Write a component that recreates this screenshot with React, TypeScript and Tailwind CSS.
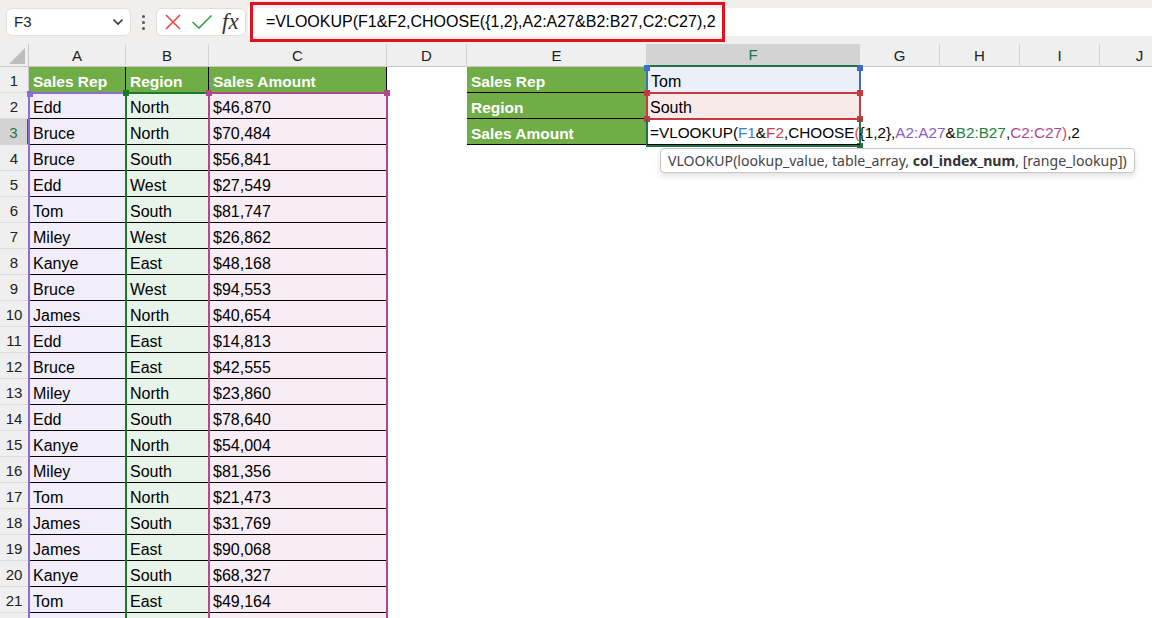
import React from "react"

const FONT = { fontFamily: '"Liberation Sans", Arial, sans-serif' }

const cols = [
  { l: "A", w: 97 },
  { l: "B", w: 83 },
  { l: "C", w: 178 },
  { l: "D", w: 80 },
  { l: "E", w: 180 },
  { l: "F", w: 213 },
  { l: "G", w: 80 },
  { l: "H", w: 80 },
  { l: "I", w: 80 },
  { l: "J", w: 80 },
]

const rows: [string, string, string][] = [
  ["Edd", "North", "$46,870"],
  ["Bruce", "North", "$70,484"],
  ["Bruce", "South", "$56,841"],
  ["Edd", "West", "$27,549"],
  ["Tom", "South", "$81,747"],
  ["Miley", "West", "$26,862"],
  ["Kanye", "East", "$48,168"],
  ["Bruce", "West", "$94,553"],
  ["James", "North", "$40,654"],
  ["Edd", "East", "$14,813"],
  ["Bruce", "East", "$42,555"],
  ["Miley", "North", "$23,860"],
  ["Edd", "South", "$78,640"],
  ["Kanye", "North", "$54,004"],
  ["Miley", "South", "$81,356"],
  ["Tom", "North", "$21,473"],
  ["James", "South", "$31,769"],
  ["James", "East", "$90,068"],
  ["Kanye", "South", "$68,327"],
  ["Tom", "East", "$49,164"],
  ["", "", ""],
]

const lookup: [string, string, string][] = [
  ["Sales Rep", "Tom", "bg-[#ebf0f8]"],
  ["Region", "South", "bg-[#f9eaea]"],
  ["Sales Amount", "", "bg-transparent"],
]

function Toolbar() {
  return (
    <div className="relative flex h-[44px] items-center bg-[#f1eeee]">
      <div className="ml-[6px] flex h-[28px] w-[125px] items-center justify-between rounded-[6px] border border-[#e1dede] bg-white pl-[7px] pr-[6px] text-[15px] text-[#222]">
        <span>F3</span>
        <svg width="12" height="8" viewBox="0 0 12 8">
          <path d="M1.5 1.5 L6 6 L10.5 1.5" fill="none" stroke="#333" strokeWidth="1.6" />
        </svg>
      </div>
      <div className="ml-[11px] flex flex-col gap-[3px]">
        <span className="h-[3px] w-[3px] rounded-full bg-[#555]" />
        <span className="h-[3px] w-[3px] rounded-full bg-[#555]" />
        <span className="h-[3px] w-[3px] rounded-full bg-[#555]" />
      </div>
      <div className="ml-[11px] flex h-[28px] w-[90px] items-center gap-[9px] rounded-[6px] border border-[#e1dede] bg-white pl-[7px]">
        <svg width="18" height="18" viewBox="0 0 18 18">
          <path d="M2 2 L16 16 M16 2 L2 16" stroke="#e5484d" strokeWidth="1.6" />
        </svg>
        <svg width="22" height="18" viewBox="0 0 22 18">
          <path d="M1.5 9 L8 15 L20.5 2.5" fill="none" stroke="#3fa34d" strokeWidth="1.7" />
        </svg>
        <span className="-mt-[2px] text-[23px] italic leading-none text-[#333]" style={{ fontFamily: '"Liberation Serif", serif' }}>
          fx
        </span>
      </div>
      <div className="ml-[2px] flex h-[28px] flex-1 items-center bg-white">
        <div className="-my-[6px] ml-[2px] flex h-[40px] w-[475px] items-center border-[3px] border-[#e3121c] pl-[13px] text-[16px] text-black">
          =VLOOKUP(F1&amp;F2,CHOOSE({"{"}1,2{"}"},A2:A27&amp;B2:B27,C2:C27),2
        </div>
      </div>
    </div>
  )
}

function F3Formula() {
  return (
    <span className="whitespace-nowrap text-[15.3px] text-black">
      =VLOOKUP(<span className="text-[#3b7bd0]">F1</span>&amp;<span className="text-[#d0414e]">F2</span>,CHOOSE
      <span className="text-[#e0445a]">(</span>
      {"{1,2}"},<span className="text-[#8a5cc8]">A2:A27</span>&amp;<span className="text-[#21823a]">B2:B27</span>,
      <span className="text-[#b3468b]">C2:C27</span>
      <span className="text-[#e0445a]">)</span>,2
    </span>
  )
}

const Sq = ({ c, cls }: { c: string; cls: string }) => <span className={`absolute h-[6px] w-[6px] ${c} ${cls}`} />

export default function App() {
  return (
    <div className="h-[618px] w-[1152px] overflow-hidden bg-white" style={FONT}>
      <Toolbar />
      <div className="relative">
        <div className="grid grid-cols-[29px_97px_83px_178px_80px_180px_213px_80px_80px_80px_80px] grid-rows-[23px] auto-rows-[26px]">
          {/* corner */}
          <div className="relative border-b border-r border-[#c9c9c9] bg-[#efefef]">
            <svg className="absolute left-[9px] top-[4px]" width="16" height="16" viewBox="0 0 16 16">
              <path d="M16 0 L16 16 L0 16 Z" fill="#bdbdbd" />
            </svg>
          </div>
          {cols.map((c) =>
            c.l === "F" ? (
              <div key={c.l} className="flex items-center justify-center border-b-2 border-r border-b-[#217346] border-r-[#d4d4d4] bg-[#d3d3d3] pt-[2px] text-[15px] text-[#217346]">
                {c.l}
              </div>
            ) : (
              <div key={c.l} className="flex items-center justify-center border-b border-r border-b-[#c9c9c9] border-r-[#d4d4d4] bg-[#efefef] pt-[2px] text-[15px] text-[#222]">
                {c.l}
              </div>
            )
          )}

          {/* row 1 */}
          <RowHead n={1} />
          <Head>Sales Rep</Head>
          <Head>Region</Head>
          <Head>Sales Amount</Head>
          <div />
          <Head>{lookup[0][0]}</Head>
          <div className={`flex items-center border-b border-black pl-[4px] pt-[4px] text-[16px] ${lookup[0][2]}`}>Tom</div>
          <div /><div /><div /><div />

          {rows.map((r, i) => {
            const n = i + 2
            const lk = n <= 3 ? lookup[n - 1] : null
            return (
              <React.Fragment key={n}>
                <RowHead n={n} />
                <div className="flex items-center border-b border-black bg-[#f1eefa] pl-[4px] pt-[4px] text-[16px]">{r[0]}</div>
                <div className="flex items-center border-b border-black bg-[#e8f3ea] pl-[4px] pt-[4px] text-[16px]">{r[1]}</div>
                <div className="flex items-center border-b border-black bg-[#f8edf5] pl-[4px] pt-[4px] text-[16px]">{r[2]}</div>
                <div />
                {lk ? (
                  <>
                    <Head>{lk[0]}</Head>
                    <div
                      className={`flex items-center border-b border-black pl-[3px] pt-[4px] text-[16px] ${lk[2]} ${
                        n === 3 ? "relative z-30" : ""
                      }`}
                    >
                      {n === 3 ? <F3Formula /> : lk[1]}
                    </div>
                  </>
                ) : (
                  <>
                    <div />
                    <div />
                  </>
                )}
                <div /><div /><div /><div />
              </React.Fragment>
            )
          })}
        </div>

        {/* reference range highlights */}
        <div className="pointer-events-none absolute left-[28px] top-[48px] h-[600px] w-[99px] border-2 border-[#8b6fd0]">
          <Sq c="bg-[#8b6fd0]" cls="-left-[3px] -top-[3px]" />
        </div>
        <div className="pointer-events-none absolute left-[125px] top-[48px] h-[600px] w-[85px] border-2 border-[#1d7a2a]">
          <Sq c="bg-[#1d7a2a]" cls="-left-[4px] -top-[4px]" />
        </div>
        <div className="pointer-events-none absolute left-[208px] top-[48px] h-[600px] w-[180px] border-2 border-[#b04a8c]">
          <Sq c="bg-[#b04a8c]" cls="-left-[4px] -top-[4px]" />
          <Sq c="bg-[#b04a8c]" cls="-right-[4px] -top-[4px]" />
        </div>

        {/* F1 blue */}
        <div className="pointer-events-none absolute left-[646px] top-[23px] z-20 h-[27px] w-[215px] border-x-2 border-[#3a6fc4]">
          <Sq c="bg-[#3a6fc4]" cls="-left-[4px] -top-[2px]" />
          <Sq c="bg-[#3a6fc4]" cls="-right-[4px] -top-[2px]" />
        </div>
        {/* F2 red */}
        <div className="pointer-events-none absolute left-[646px] top-[48px] z-20 h-[28px] w-[215px] border-2 border-[#c7383f]">
          <Sq c="bg-[#c7383f]" cls="-left-[4px] -top-[4px]" />
          <Sq c="bg-[#c7383f]" cls="-right-[4px] -top-[4px]" />
          <Sq c="bg-[#c7383f]" cls="-left-[4px] -bottom-[4px]" />
          <Sq c="bg-[#c7383f]" cls="-right-[4px] -bottom-[4px]" />
        </div>
        {/* F3 active */}
        <div className="pointer-events-none absolute left-[646px] top-[75px] z-20 h-[28px] w-[215px] border-2 border-t-0 border-[#217346]">
          <Sq c="bg-[#217346]" cls="-right-[4px] -bottom-[4px]" />
        </div>

        {/* tooltip */}
        <div
          className="absolute left-[660px] top-[104px] z-40 flex h-[25px] items-center rounded-[4px] border border-[#c6c6c6] bg-white px-[7px] text-[14.1px] text-[#444] shadow-[0_3px_6px_rgba(0,0,0,0.12)]"
          style={{ fontFamily: '"Noto Sans", "Open Sans", sans-serif' }}
        >
          VLOOKUP(lookup_value, table_array, <b className="font-bold text-[#333]">&nbsp;col_index_num</b>, [range_lookup])
        </div>
      </div>
    </div>
  )
}

function Head({ children }: { children: React.ReactNode }) {
  return (
    <div className="flex items-center border-b border-r border-black bg-[#70ad47] pl-[4px] pt-[4px] text-[15.5px] font-bold text-white">
      {children}
    </div>
  )
}

function RowHead({ n }: { n: number }) {
  if (n === 3)
    return (
      <div className="flex items-center justify-center border-b border-r-2 border-b-[#d4d4d4] border-r-[#217346] bg-[#d3d3d3] pt-[4px] text-[15px] text-[#217346]">
        {n}
      </div>
    )
  return (
    <div className="flex items-center justify-center border-b border-r border-b-[#dcdcdc] border-r-[#c9c9c9] bg-[#efefef] pt-[4px] text-[15px] text-[#222]">
      {n < 22 ? n : ""}
    </div>
  )
}
